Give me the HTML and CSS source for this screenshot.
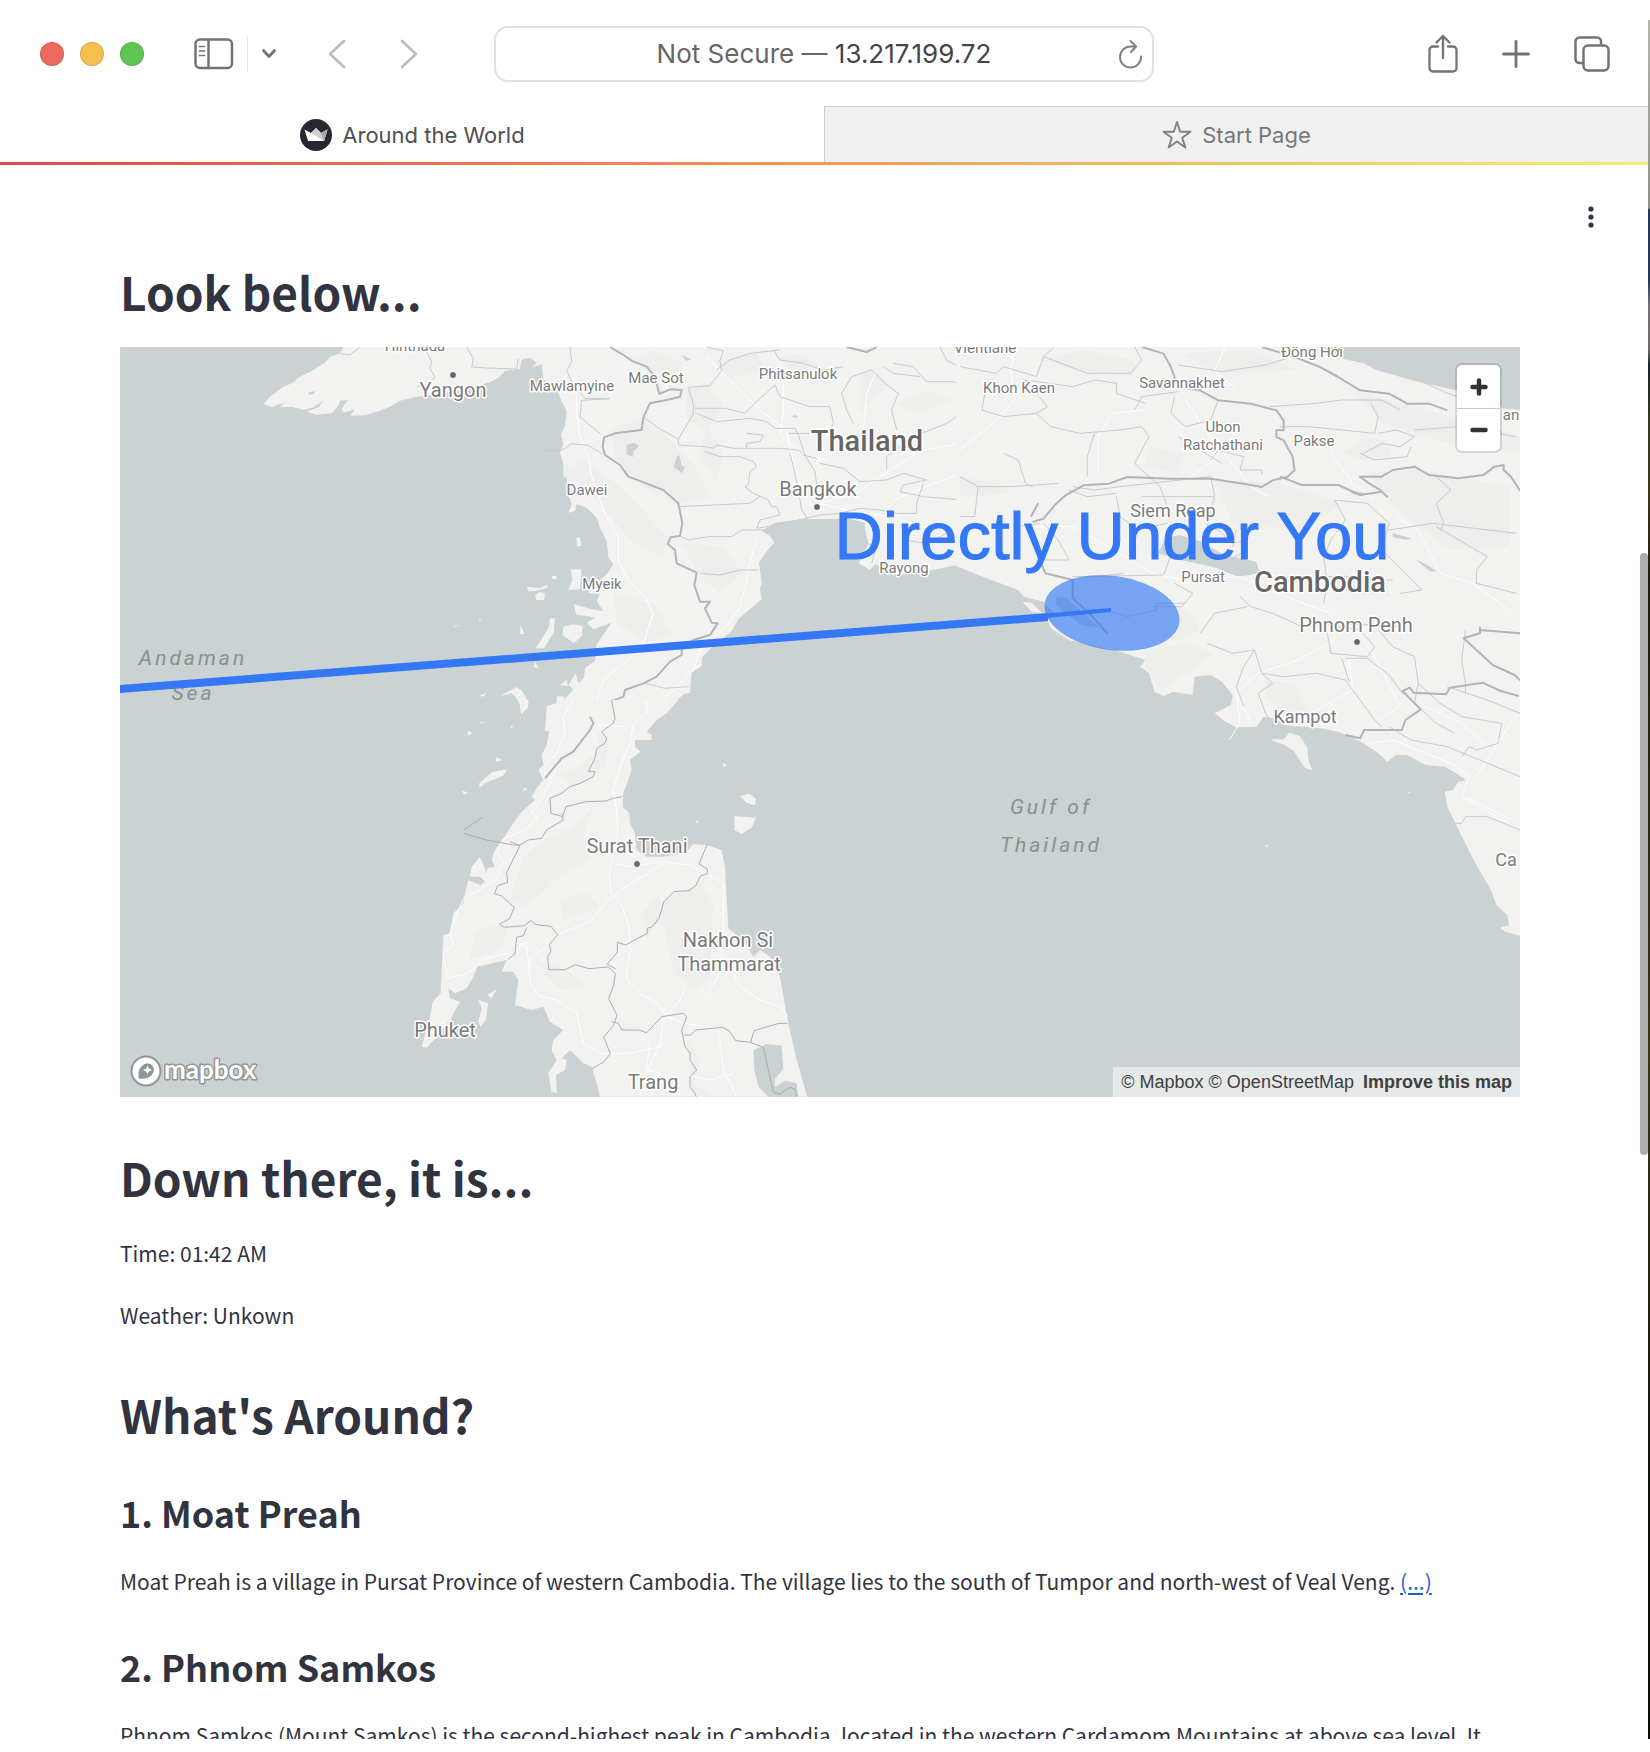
FILE: index.html
```html
<!DOCTYPE html>
<html lang="en">
<head>
<meta charset="utf-8">
<meta name="viewport" content="width=device-width, initial-scale=1">
<title>Around the World</title>
<link rel="stylesheet" href="styles.css">
</head>
<body>
<div class="desktop">
  <div class="window">
    <header class="toolbar">
      <div class="toolbar-left">
        <div class="lights">
          <button class="light light-close" aria-label="Close"></button>
          <button class="light light-min" aria-label="Minimize"></button>
          <button class="light light-max" aria-label="Zoom"></button>
        </div>
        <div class="sidebar-tools">
          <button class="tool" aria-label="Show sidebar">
            <svg width="40" height="32" viewBox="0 0 40 32" fill="none" stroke="#737373" stroke-width="2.5"><rect x="1.5" y="1.5" width="36.5" height="28.5" rx="4.5"/><path d="M14.5 2v28"/><path d="M5.5 8.5h5M5.5 13h5M5.5 17.500h5" stroke-width="1.700" stroke-linecap="round"/></svg>
          </button>
          <span class="tool-divider"></span>
          <button class="tool" aria-label="Sidebar options">
            <svg width="16" height="12" viewBox="0 0 16 12" fill="none" stroke="#737373" stroke-width="2.800" stroke-linecap="round" stroke-linejoin="round"><path d="M2.500 2.500 8 8.500l5.500-6"/></svg>
          </button>
        </div>
        <div class="history">
          <button class="tool" aria-label="Back">
            <svg width="20" height="30" viewBox="0 0 20 30" fill="none" stroke="#bdbdbd" stroke-width="2.800" stroke-linecap="round" stroke-linejoin="round"><path d="M17 2 3 15l14 13"/></svg>
          </button>
          <button class="tool" aria-label="Forward">
            <svg width="20" height="30" viewBox="0 0 20 30" fill="none" stroke="#bdbdbd" stroke-width="2.800" stroke-linecap="round" stroke-linejoin="round"><path d="m3 2 14 13L3 28"/></svg>
          </button>
        </div>
      </div>
      <div class="address">
        <span class="address-text">Not Secure — <b>13.217.199.72</b></span>
        <button class="tool reload" aria-label="Reload">
          <svg width="26" height="30" viewBox="0 0 26 30" fill="none" stroke="#808080" stroke-width="2" stroke-linecap="round" stroke-linejoin="round"><path d="M23 17.500A10.500 10.500 0 1 1 12.500 7.500h5"/><path d="m12.500 2 5.500 5.500-5 5.500"/></svg>
        </button>
      </div>
      <div class="toolbar-right">
        <button class="tool" aria-label="Share">
          <svg width="30" height="40" viewBox="0 0 30 40" fill="none" stroke="#737373" stroke-width="2.300" stroke-linecap="round" stroke-linejoin="round"><path d="M10 12.500H5A3.500 3.500 0 0 0 1.500 16v18A3.500 3.500 0 0 0 5 37.500h20a3.500 3.500 0 0 0 3.500-3.500V16a3.500 3.500 0 0 0-3.500-3.500h-5"/><path d="M15 24V2M8.500 8.500 15 2l6.500 6.500"/></svg>
        </button>
        <button class="tool" aria-label="New tab">
          <svg width="28" height="28" viewBox="0 0 28 28" stroke="#737373" stroke-width="2.800" stroke-linecap="round"><path d="M14 1.500v25M1.500 14h25"/></svg>
        </button>
        <button class="tool" aria-label="Tab overview">
          <svg width="36" height="36" viewBox="0 0 36 36" fill="none" stroke="#737373" stroke-width="2.500"><rect x="9.500" y="9.500" width="25" height="25" rx="4.500"/><path d="M9 27H5.500A4 4 0 0 1 1.500 23V5.500a4 4 0 0 1 4-4H23a4 4 0 0 1 4 4V9"/></svg>
        </button>
      </div>
    </header>

    <nav class="tabs">
      <a class="tab tab-active" href="#top">
        <svg width="32" height="32" viewBox="0 0 32 32"><circle cx="16" cy="16" r="16" fill="#262730"/><path d="m4.500 10.500 6.500 3.500 5-5 5 5 6.500-3.500-3.500 11.500H8z" fill="#fff"/><path d="m11 14 13 8 3.500-11.500L21 14l-5-5z" fill="#d0d0d0"/><path d="m21 14 6.500-3.500L24 22z" fill="#a9a9a9"/></svg>
        Around the World
      </a>
      <a class="tab" href="#start">
        <svg width="30" height="30" viewBox="0 0 30 30" fill="none" stroke="#808080" stroke-width="1.900" stroke-linejoin="round"><path d="m15 2 3.200 9.700h10.300l-8.300 6 3.200 9.800-8.400-6-8.400 6 3.200-9.800-8.300-6h10.300z"/></svg>
        Start Page
      </a>
    </nav>

    <main class="page" id="top">
      <button class="kebab" aria-label="Main menu">
        <svg width="8" height="22" viewBox="0 0 8 22" fill="#31333f"><circle cx="4" cy="3" r="2.600"/><circle cx="4" cy="11" r="2.600"/><circle cx="4" cy="19" r="2.600"/></svg>
      </button>
      <h1>Look below...</h1>

      <div class="map">
        <svg class="map-canvas" viewBox="120 347 1400 750" role="img" aria-label="Map of the Gulf of Thailand">
          <rect x="120" y="347" width="1400" height="750" fill="#cad2d3"/>

          <!-- Myanmar and western Thailand -->
          <g transform="translate(500 330) scale(.33333)">
            <path class="land" d="M-470 51l-10 19-30 10-15 18-45 27-30 15-25 20-25 10-20 15-20 15-20 22 25 10 15-7 25-7-15 14 35-2 35 10 30-8 30-20-15 20-35 13 30 9 45-4 20-22 5-16 25-2-20 25 5 13 35-10-15 19 45-1 45-14 35-14 25-16 50-12 60-8 60-8 60-16 40-12 25-13 20-20 45-7 5-28 25-5 20 15-15 15 30-10 5 45 40 30 10 25 20 40-5 45-12 25 7 30-10 25 10 35 10 40 5 50 10 30-10 25 20-5 5-20 30 10 30 30 10 30 20 40 5 50 15 20-20 30-40 35-15 20 35 5-10 20 20 30-35-5-53-15 6 30 57 10-25 15 20 20 55-20-25 35-20 30-5 50-30 20-3 30-32 35-30 35-50 15-5 75 295 0 95-85 25-25 20-5 5-60 30-20v-25l35-35 55-45 20-35 70-60-5-30 5-20-8-60 28-40 18-20-13-20-25-15 40-25 80-10 140-2 50 12v20l10 40-15 40-15 20 35 22 15-17 80 30 90-13 90-17 60 35V51z"/>
            <path class="land" d="M230 622l10 0 5 25-15 3zM80 770l40 5 20-10 5 8-40 10-20 1zM118 786l17 4-3 20-22 1-5-15zM212 718h33l-5 60-35 2 12-30zM190 890l30-7 28 5-3 30-23 22-35-25zM150 865l14 0-2 40-30 50h-25l20-30 20-35zM62 886l12 25-15 3zM0 1098l50-27q32 20 32 55l-15 24-6-4q4-30-26-56zM170 1098l25 2-5 18h-20zM180 1065l20-15 3 18zM205 1065l22-35 8 30 25 5-30 20zM155 738h14v9h-13zM-60 1095l22-6-15 12zM105 995l10 20-15-4zM-140 888l25-3-20 5zM-65 870l10-3-6 8z"/>
            <g class="terrain">
              <path d="M330 300l90-30 70 40 90 90 50 100-90 20-110-50-80-80zM560 180l60-20 50 60-50 90-60-40zM400 90l60-30 90 40-20 60-60-10zM230 380l50 30 80 60 60 60 80 90-10 60-90-40-110-130-70-60zM540 640l130 10 60 80-70 60-50-40zM620 290l50 80-20 90-50-80zM1080 130l50-20 30 60-80 80zM1180 220l110-40 70 30-110 40zM340 790l120 30 60 90-80 30-90-60zM640 90l130-20 30 60-120 10zM190 400l40 20-10 30-30-10zM840 80l70-10 60 50-70 20z"/>
            </g>
            <g fill="#cad2d3"><path d="M380 345l20-7 18 10-17 15-2 18-20-8zM538 374l6 30 10 8-8 18-25-20 10-30zM545 75l18 8 10 7-15 2zM875 259l10-4 12 6-15 2zM-575 188l18-5 0 8-18 4z"/></g>
            <g class="road">
              <path d="M220 140l10 60 0 50 10 70 25 60 10 60 40 110 40 70 0 70 30 60 50 50 25 50-20 60-10 40-60 50-60 50-20 60-60 40-40 50"/>
              <path d="M770 620l-15 60-15 70-20 80-40 60-80 70-20 60-60 60-60 60-20 60M850 160l0 90-10 60 60 60 80 20M1130 120l-30 70-10 110M1440 330l-170 30-100 60-100 70-110 30 80 20 130 20 160 50M620 80l160 160 80 60 20 100 30 90 30 40M1440 380l-60 50-200 80"/>
            </g>
            <g class="province">
              <path d="M-480 70l30 5 30-24M-190 51l-30 15 15 30-5 20 15 25-20 20-35 10M-100 51l20 35-5 25 45 3 90 3 5-30M210 51l5 45-15 25 15 35 40 50 75 0-85 5-5 50 60 50M135 361l50 0 30-20 50 5 40 25M430 262l50 35 55 30 45-75 0-30-15-50 65-5 35-45-5-30 10-30-50-10M535 325l0 20 80 5 25 5 10-10 50 10 140 0 55 5 15 15 40 10M585 235l90 0 60 15 40-40 50-45 15 35 90 30 60 0 10 50-15 30-120 0M590 250l60 25 100-10 50 10 25 20 60 0 10 20 20 60 30 50 5 40M615 365l45 15 60 0 40 15 10 15-20 15-5 40-10 5 25 20 45 20 10 20 15 0 10 25-60 15-10 25 60-10 130-30 60-5 60-15 60 5 50 10 60 0 0-30 20-60M540 530l100-5 110-5 30-20M545 620l20 10 60-10 70 0 30-20 75 0M600 730l60 5 60-15 55 0M435 1060l60 15 70-5M740 310l50 5-10 20-40 5 0 15M870 370l15 60 10 50 10 60 20 30M960 400l70 15 50 40 80-5 50-20 70 20-70 15-10 20 70 15 120 10M1160 420l0-40 80-60 100-40 60-40M1190 300l-15-60 20-50-40-30-40-40-60 20-30 50 15 50 20 40M1180 100l60 10 40 45 80 0 80 30M820 60l20 30 70 10 60 20 60-10M650 120l40-30 60-20 90-10M1320 51l20 40 60 30 40 10M1100 640l30 10-15 50M1210 630l70 10 60-30 60 20-10 80M1150 110l30 20 80 10"/>
            </g>
            <path class="border" d="M330 51l40 24 30 20 40 15 25 30 13 52 32-14 35 2-5 20-40 10-50 10-20 42-5 38-80 10-33 12-4 28 7 25 45 30 25 35 40 15 65 25 45 40 12 60-7 38-28 4-9 20 22 18 5 40 60 28-7 37 17 50 30 0-15 20 20 43 18 2-23 35-50 15-35 20v25l-35 20-40 45-40 20-55 20-5 20-50 20-50 30 5 50"/>
            <path class="border" d="M1040 51l60 15 30-15"/>
          </g>

          <!-- Peninsular Thailand -->
          <g transform="translate(400 700) scale(.33333)">
            <path class="land" d="M535 0l-90 40 5 45-10 50-15 30 5 30-15 15 15 30-20 25-15 25 10 10-40 35-25 35-30 45-25 35-10 30 10 20-23 5-2 15-20-50-25 30-5 30 30 0 15 15-15 10-35-15-10 40-5 30-30 30-10 60-20 5-8 175-24 25-8 45-25 90 15 3 30-33 40-50 30-55-30-10-5-30 20 15 35-15 20-35 12-30 88-20-15 35 35 0 15 25-10 75 50 15 35-10 20 45 40 25-30 30-5 30 15 30-25 40 10 55 15 5-2-55 27-15 5-30-15-5 25-25 40 40 25 10 15 50 10 40h622l-32-110-25-110-25-140-30-60-30-20-20 20-30-50-45-35-10-185-10-50-45-15-40-3-20 23-70 15h-50l-30-20-5-50-15-30-2-30-20-20 2-40 15-40 10-30-5-30 32-25-17-15v-20h50v-15l-15-10 30-35 30-20 35-40z"/>
            <path class="land" d="M378 0h8l-3 25-20 17 3-15zM238 250l40-35 45-7-15 20-50 20-20 15zM185 272l18 5-10 7zM290 172l18 8-22 5zM203 92l15 6-15 9zM238 67l25-2-23 5zM330 80l12-3-8 8zM373 262l8 5-12 8zM1020 288l28-7 20 15-3 20-25-8zM1003 348l64 5-12 30-30 18-22-10zM968 190l13 5-10 7zM884 365l12-4-3 8zM235 900l30 10-8 50-15 20-7-15 10-40zM262 885l28-18-15 28z"/>
            <path fill="#cad2d3" d="M378 512l15-2 28 15 4 12-15 10-20-8-14-15zM1060 1050l40-18 45 5 5 70-25 30 0 25 30-20 35 8 5 42-90-2-30-30-12-50z"/>
            <g class="terrain"><path d="M480 220l60-20 60-60-15-50 40 20-10 90-100 60zM370 470l60-50 90-40 60-60-30 80 20 80-90 50-100 90-50-20zM780 610l120-60 40 60-10 230-50 30-60-50zM230 690l100-20-30 80-90 30zM400 780l90 20 70 60-80 10zM720 650l50-70 30 60-60 70zM860 1010l40 80-20 60 60 40-60 0zM480 600l80-20 40 40-110 40z"/></g>
            <g class="road">
              <path d="M520 0l-30 50 5 50-25 60-40 40M470 200l-40 90-35 50 20 15-50 40-50 20-25 40 20 30-20 50-60 40-40 20-40 100 10 40-30 30 15 70 60-15 50-45 90-20 30-30M740 0v40l-40 30-10 60-30 70-20 70 10 60 3 70-25 120 5 60 35 40 20 70 3 60-10 50 0 40 40 40 50 30 30 40 50 20 80 10 25 20 15 110 30 60 30 60-10 60M640 490l50 10 100-15 80 10 40 20 60 35 0 120-5 90-10 70-40 60M790 490l-120 75-50 40-50 60-90 35M360 730l20 10 10 70 0 40 30 40 50 10 60 40 20 90 50 30 90 0 90-20 10-80 50-60 20-50M440 740l-45 30-10 40M1000 820l20 40 60 40 60 20 25 30M750 1020l-10 90 40 10 60 70M780 1035l-30 60-30 90M860 1125l70 15 70-20M595 75l80 5"/>
            </g>
            <g class="province wide">
              <path d="M635 0l10 55-5 15-35 25 15 20-5 15-25 15-5 30-20 40 20 0-5 15-40 20-30 10-25 20-35 15 3 45 35 10 10-30 60-15 60-2 20-8 30-5M485 340l5 20-50 30-15 25-40 5-25 15-20 0-80-15-70-20M192 390l55-38M330 425l30 12-20 40-20 40 3 30-30 10-10 25 20 5 40 35-15 35-30 15 15 10 60-5 20-15 15 12 45 5 20 25-25 30 5 20-10 15 3 40 50 0 30-15 40 12 60-5 20 20-5 35-15 40 25 50-10 30-30 35 20 50-20 25-35 20M380 682l-10 25-20 5-5 50-20 15M922 432l-25 60 25 15v15l-20 5-15 30-20 15-45 3-30 30-15 50-20 25-15 5v15l-65 35-25-8v30l-30 35 25 15"/>
              <path d="M635 965l20 5 10 20 50 0 25 8 45-48 65-10 10 10-15 40 10 50 15 20 0 20 20 30-20 20 0 30 15 20 10 30M852 1005l20 0 15-15 80-8 20 10 20 30 45 5 10-35 75-22 25 0M1050 1027l40 15 30 135 20 5 30-20 15 5 5 23"/>
            </g>
            <path class="border" d="M570 50l10 20-10 20-50 65-35 20-50 60"/>
          </g>

          <!-- Eastern Thailand, Laos, Cambodia, southern Vietnam -->
          <g transform="translate(960 330) scale(.36364 .33333)">
            <path class="land" d="M-10 51V708L50 735l110 45 15 20 55 15 30 35-20 20 10 25 50 35 80 20 60 15 70 25-15 20 25 20 15 55 25 13 25-13 55 10 5-55 45-5 30 20 30 40-5 30-45 25 30 25 30 17 55-2 20-30 30 5 30 20 95 10 50 10 40 20 30 15 40 30 25 25 25-20h30l50 30 55 5 50 35 5 7-20 3-15 25-22 5 7 45 40 90 40 85 40 75 15 45 30 30 5 30-25 8 15 12 40 12V240l-50-5-10-25-120-30-120-30-100-32-30-18-65-15-50-34z"/>
            <path class="land" d="M858 1228l32 0 15-20 30 10 20 35 3 35 10 33-20-8-30-50-30-20-28-10zM172 816l25 2 30 32-30-5zM285 905l20 5 3 22-18-8zM1228 1387l12 0-5 3zM840 1546h8v4h-8z"/>
            <path fill="#cad2d3" d="M565 625l40-10 60 20 60 40 90 20 10 35-60 10-70-30-90-20-60-20zM1255 690l20 8 35 25-15 2-25-20zM1190 610l50 15-10 5-40-8zM1070 480l50 10 0 5-40-2zM432 90l18-3 5 9-15 2zM265 800l30 5 30 30 60 60-50-10-40-30-30-30z"/>
            <g class="terrain"><path d="M310 750l160-10 60 60 100 40 30 60-60 30-120-20-90-40-70-70zM510 960l110-20 80 30-60 50-90 60-40-70zM840 1050l80 10 40 90-60 10-60-60zM700 450l180 10 170 60-100 80-200-20zM1080 180l200 60 260 80v50l-200-30-180-60zM220 90l120-30 140 30 0 50-170-20zM1120 430l150-10 240 50v180l-160 10-150-120zM1000 740l130 0 60 60-120-10zM0 440l100 20 40 30-140 10zM520 350l100 20-20 60-90-20zM600 70l200-10 130 60-220 10zM1050 370l60-50 60 10 20 50-80 10z"/></g>
            <g class="road">
              <path d="M150 60l-10 60 10 90-60 70-90 80M380 430l0-110 40-70 90-10M620 210l60 100 20 80-80 60M690 320l110 150 50 30M1020 370l60 90 60 50M160 590l150 0 80 50 140 90 80 20 160-10 100 50 150 60M1030 930l-100 60-110 40-60 60 10 90-30 50M1100 910l60 110 50 110-60 40M1070 980l10 100-100 60-60 50M1280 1130l100 50 80 80M1420 1340l100-170M1390 1400l130 70M1200 560l60 40 60 130 90 30 100 80M730 50l-30 70 60 60M800 1180l-40-90"/>
              <path d="M1120 1240l70-10 160 70 50 40-20 60 130 80"/>
            </g>
            <g class="province">
              <path d="M0 110l100 20 20-20 90 30 20-60 30-30M230 80l120 50 120 0 30-40-20-40M70 180l-10 60 60 20 90-10 30-20-60-80 130 20 60-20 60 10 0 30 80 30M210 250l40 40 80 20 110-10 60-10 20 30-40 80 70 70 20 60M370 310l-20 70 0 60M120 370l40 20 20 70 20 10M0 440l50 30-10 90-40 0M50 470l90 0 130-10M600 105l120 20 120-20 60-20M590 200l-10 50 40 40 70-20 20-60M480 240l20-40 100-15M690 390l20-30 70 20-10 40 60 0 0 15M600 320l120 80M850 230l130-10 70-10 110 0 50 30M880 290l80 0 180 20 10-50-20-40M1110 370l50-30 50 10 40-30-50-20-50 10M1100 370l40 20 90-10 10-30M1250 300l120-10 160 30M1220 130l120 60 90 30 60 90M1310 440l40 40-40 40 20 60-10 20"/>
              <path d="M310 470l60 10 70-10 250-30 10 60-20 90 30 10 40 40 40-10 0 20M430 500l10 60 50 40 80-20M300 480l50 20 80-10M230 580l40 50 30 60-90 0M160 590l60-10M500 500l200 0M320 740l240-5 20-60-10-50M530 830l80 0 30-40-50-30M310 740l60 0 80-10M400 840l60 20 80-20 0-20 80 0M770 800l30 30 60 20 80 40 100-10 170 10M660 910l40-60 90-20M680 940l70 30 60-10-30 50-20 60 20 60M810 960l20 70 60 10 90-10 80 20 40 60 40 60 20 20M830 1030l30 30-40 30 20 60 20 30 0 20M1010 910l10 60 100 10 20-30-40-50-60-10M1050 985l20 70M1060 985l60 0 60 50 40 60M1150 900l40 50 60 30 10 80-10 60 60 60 50 30M1030 510l30 60-40 60-20 50 10 80-10 60M1030 510l90 10 60 60-20 80 110 120-60 10M1000 740l70 0 60 10 60 0M1180 600l120-20 230 30M1310 590l140 90-30 40 0 40 110 30M1390 900l-10 90 10 70 0 30M1340 1070l110 40 90 40M1260 1060l60 60 60 40 110 20-10 60-60 20-20-10-20 30M1180 1190l60 40 100 20 200 90M1360 1480l20 0 10-20 60 0 90 40M760 600l-10 50M770 590l20 70-50 30"/>
            </g>
            <path class="border" d="M500 51l60 20 20 40 20 60 60 10 50 30 90 10 70 20 20 30 0 30-20 0 0 20 20 10 25 50 5 40-20 20-40 10-30 20-50-10-90-15-110 0-120-5-50 20-70 5-50 30-30 30-30 40-30 10M880 440l60 25 100 0 60 30 60-10 15 15-20-20-30-20-25-20 60 0 30-20 60-10 40 25 80 10 70-10 30-25 25-5 0 15 20 20 30 50 30 0M830 51l90 30 70 30 50 30 60 40 80 10 50 30 60 0 50 20M1110 1200h105l10-30 42-32-50-55 20-10 10 15 90 5 10-20 90-15 50 25 50 15M1430 890l0 20-45 15 30 30 30 30 20 20 60 30 20 20M1430 900l110 10M215 680l20 50 75 20 0 55 50 50 45 55M1060 1215l40 10 12-25M195 560l20-40"/>
          </g>

          <g class="label">
            <g class="label-s">
              <text x="415" y="351">Hinthada</text>
              <text x="572" y="391">Mawlamyine</text>
              <text x="656" y="383">Mae Sot</text>
              <text x="798" y="379">Phitsanulok</text>
              <text x="985" y="353">Vientiane</text>
              <text x="1019" y="393">Khon Kaen</text>
              <text x="1182" y="388">Savannakhet</text>
              <text x="1312" y="357">Đồng Hới</text>
              <text x="1223" y="432">Ubon</text>
              <text x="1223" y="450">Ratchathani</text>
              <text x="1314" y="446">Pakse</text>
              <text x="1511" y="420">an</text>
              <text x="587" y="495">Dawei</text>
              <text x="602" y="589">Myeik</text>
              <text x="904" y="573">Rayong</text>
              <text x="1203" y="582">Pursat</text>
            </g>
            <g class="label-m">
              <text x="1173" y="517">Siem Reap</text>
              <text x="1305" y="723">Kampot</text>
              <text x="1506" y="866">Ca</text>
            </g>
            <g class="label-l">
              <text x="728" y="947">Nakhon Si</text>
              <text x="729" y="971">Thammarat</text>
              <text x="453" y="397">Yangon</text>
              <text x="818" y="496">Bangkok</text>
              <text x="1356" y="632">Phnom Penh</text>
              <text x="637" y="853">Surat Thani</text>
              <text x="445" y="1037">Phuket</text>
              <text x="653" y="1089">Trang</text>
            </g>
            <g class="label-country">
              <text x="867" y="451">Thailand</text>
              <text x="1320" y="592">Cambodia</text>
            </g>
          </g>
          <g class="label-sea">
            <text x="193" y="665">Andaman</text>
            <text x="193" y="700">Sea</text>
            <text x="1051" y="814">Gulf of</text>
            <text x="1051" y="852">Thailand</text>
          </g>
          <g fill="#666" stroke="#fff" stroke-width="1"><circle cx="453" cy="375" r="3.500"/><circle cx="817" cy="507" r="3.500"/><circle cx="1357" cy="642" r="3.500"/><circle cx="637" cy="864" r="3.500"/></g>

          <ellipse cx="1112" cy="613" rx="68" ry="37" transform="rotate(8 1112 613)" fill="#3478f6" fill-opacity=".64"/>
          <path d="M120 685 1048 613v8L120 693z" fill="#3478f6"/>
          <path d="m1046 613.500 65-5.500v4l-65 6z" fill="#3478f6"/>
          <text class="callout" x="1112" y="559">Directly Under You</text>
        </svg>

        <div class="zoom-control">
          <button aria-label="Zoom in"><svg width="18" height="18" viewBox="0 0 18 18" stroke="#333" stroke-width="4.500" stroke-linecap="round"><path d="M9 2.500v13M2.500 9h13"/></svg></button>
          <button aria-label="Zoom out"><svg width="18" height="18" viewBox="0 0 18 18" stroke="#333" stroke-width="4.500" stroke-linecap="round"><path d="M2.500 9h13"/></svg></button>
        </div>
        <a class="map-logo" href="#mapbox" aria-label="Mapbox">
          <svg width="140" height="36" viewBox="0 0 140 36">
            <circle cx="18" cy="18" r="14.500" fill="#fff" stroke="#8d9797" stroke-width="2"/>
            <path d="M11 25.500c-1.500-6 .5-11 4-13.500 3.500-2.400 7.500-1.800 9.500.8 2.300 3 1.500 7.500-1.500 10-3 2.600-7.500 3.400-12 2.700z" fill="#8d9797"/>
            <path d="m19.500 12.500 1.400 3.100 3.100 1.400-3.100 1.400-1.400 3.100-1.400-3.100L15 17l3.100-1.400z" fill="#fff"/>
            <text class="map-logo-text" x="36" y="26">mapbox</text>
          </svg>
        </a>
        <div class="attribution">
          <a href="#mapbox">© Mapbox</a> <a href="#osm">© OpenStreetMap</a> <a class="improve" href="#improve">Improve this map</a>
        </div>
      </div>

      <h1 class="section-title">Down there, it is...</h1>
      <p>Time: 01:42 AM</p>
      <p>Weather: Unkown</p>

      <h1 class="section-title">What's Around?</h1>
      <h2>1. Moat Preah</h2>
      <p>Moat Preah is a village in Pursat Province of western Cambodia. The village lies to the south of Tumpor and north-west of Veal Veng. <a class="more" href="#moat-preah">(...)</a></p>
      <h2>2. Phnom Samkos</h2>
      <p>Phnom Samkos (Mount Samkos) is the second-highest peak in Cambodia, located in the western Cardamom Mountains at above sea level. It</p>
    </main>
    <div class="scroll-thumb"></div>
  </div>
  <div class="wallpaper"></div>
</div>
</body>
</html>
```
FILE: styles.css
```css
* {
  box-sizing: border-box;
}

body {
  margin: 0;
  background: #fff;
  color: #31333f;
  font-family: "Noto Sans CJK SC", "Noto Sans", sans-serif;
}

button {
  padding: 0;
  border: 0;
  background: none;
}

svg {
  display: block;
}

.desktop {
  display: grid;
  grid-template-columns: minmax(0, 1fr) 2px;
  height: calc(100vh - 33px);
  margin-top: 20px;
}

.wallpaper {
  background: linear-gradient(#b4b5ab 0, #8f9186 188px, #23375c 190px, #22355a 260px, #77717c 285px, #6d6a68 330px, #17242a 345px, #343a1c 400px, #3d3516 480px, #201a10 560px, #3a3516 60%, #10130b 85%, #0a0c06);
}

.window {
  position: relative;
  overflow: hidden;
}

/* Browser toolbar */

.toolbar {
  display: grid;
  grid-template-columns: 1fr minmax(0, 660px) 1fr;
  align-items: center;
  height: 86px;
  padding-bottom: 18px;
}

.toolbar-left,
.toolbar-right,
.lights,
.sidebar-tools,
.history {
  display: flex;
  align-items: center;
}

.toolbar-left {
  gap: 50px;
  padding-left: 40px;
}

.toolbar-right {
  justify-content: flex-end;
  gap: 44px;
  padding-right: 38px;
}

.lights {
  gap: 16px;
}

.light {
  width: 24px;
  height: 24px;
  border: 1px solid rgba(0, 0, 0, .12);
  border-radius: 50%;
}

.light-close { background: #ed6a5e; }
.light-min { background: #f5bf4f; }
.light-max { background: #61c554; }

.sidebar-tools {
  gap: 13px;
}

.tool-divider {
  width: 1px;
  height: 36px;
  background: #e6e6e6;
}

.history {
  gap: 52px;
}

.address {
  display: flex;
  align-items: center;
  justify-content: center;
  position: relative;
  height: 56px;
  border: 2px solid #e1e1e1;
  border-radius: 14px;
  color: #666;
  font: 26px/32px Inter, sans-serif;
}

.address b {
  color: #454545;
  font-weight: 400;
}

.reload {
  position: absolute;
  right: 8px;
}

.tabs {
  display: grid;
  grid-template-columns: 1fr 1fr;
  height: 59px;
  border-bottom: 3px solid;
  border-image: linear-gradient(90deg, #e04848, #ee9a5a 50%, #f3ef6d) 1;
}

.tab {
  display: flex;
  align-items: center;
  justify-content: center;
  gap: 10px;
  border-top: 1px solid #cecece;
  border-left: 1px solid #cecece;
  background: #f0f0f0;
  color: #777;
  font: 22px/28px Inter, sans-serif;
  text-decoration: none;
}

.tab-active {
  border-color: transparent;
  background: none;
  color: #505050;
}

/* Page */

.page {
  position: relative;
  padding: 96px 128px 0 120px;
}

.kebab {
  position: absolute;
  top: 41px;
  right: 53px;
}

h1 {
  margin: 0 0 26px;
  font-size: 46px;
  font-weight: 700;
  line-height: 60px;
}

.section-title {
  margin: 50px 0 29px;
}

h2 {
  margin: 46px 0 30px;
  font-size: 36px;
  font-weight: 700;
  line-height: 44px;
}

p {
  margin: 28px 0;
  font-size: 21px;
  line-height: 34px;
  white-space: nowrap;
}

p + .section-title {
  margin-top: 52px;
}

.more {
  color: #1c62c8;
  text-underline-offset: 3px;
}

.scroll-thumb {
  position: absolute;
  top: 31%;
  right: 0;
  width: 8px;
  height: 35%;
  border-radius: 4px;
  background: #adadb1;
}

/* Map */

.map {
  position: relative;
  overflow: hidden;
}

.map-canvas {
  width: 100%;
  height: auto;
}

.land {
  fill: #f2f2f1;
}

.terrain {
  fill: #eeeeed;
}

.road,
.province,
.border {
  fill: none;
  stroke-linejoin: round;
}

.road path,
.province path,
.border {
  vector-effect: non-scaling-stroke;
}

.road {
  stroke: #fff;
  stroke-width: 1px;
}

.province {
  stroke: #cacaca;
  stroke-width: 1px;
}

.wide {
  stroke: #aeaeae;
}

.border {
  stroke: #b4b4b4;
  stroke-width: 2px;
}

.label {
  fill: #7a7a7a;
  stroke: #fff;
  stroke-width: 3px;
  stroke-linejoin: round;
  paint-order: stroke;
  text-anchor: middle;
  font-family: Roboto, sans-serif;
}

.label-s { font-size: 15px; }
.label-m { font-size: 18px; }
.label-l { font-size: 20px; }

.label-country {
  fill: #666;
  font-size: 29px;
  font-weight: 500;
}

.label-sea {
  fill: #87918f;
  font: italic 21px Roboto, sans-serif;
  letter-spacing: 3px;
  text-anchor: middle;
}

.callout {
  fill: #3478f6;
  stroke: #3478f6;
  stroke-width: 1px;
  font: 67px "Liberation Sans", sans-serif;
  text-anchor: middle;
}

.zoom-control {
  position: absolute;
  top: 18px;
  right: 20px;
  width: 43px;
  overflow: hidden;
  border-radius: 5px;
  background: #fff;
  box-shadow: 0 0 0 2px rgba(0, 0, 0, .12);
}

.zoom-control button {
  display: grid;
  place-items: center;
  width: 100%;
  height: 43px;
}

.zoom-control button + button {
  border-top: 1px solid #ccc;
}

.map-logo {
  position: absolute;
  bottom: 8px;
  left: 8px;
}

.map-logo-text {
  fill: #fff;
  stroke: #8d9797;
  stroke-width: 3px;
  stroke-linejoin: round;
  paint-order: stroke;
  font: 700 26px Lato, sans-serif;
}

.attribution {
  position: absolute;
  right: 0;
  bottom: 0;
  padding: 0 8px;
  background: rgba(255, 255, 255, .5);
  color: #404040;
  font: 18px/30px "Liberation Sans", sans-serif;
}

.attribution a {
  color: inherit;
  text-decoration: none;
}

.attribution .improve {
  margin-left: 4px;
  font-weight: 700;
}
```
